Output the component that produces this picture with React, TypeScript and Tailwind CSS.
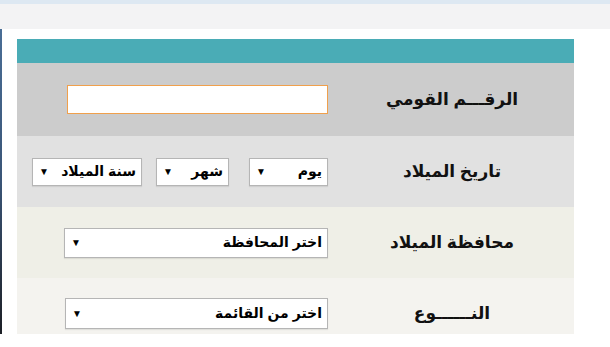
const Select = ({ label, className }: { label: string; className: string }) => (
  <div
    className={`flex items-center justify-between border border-[#b5b5b5] bg-white pr-[5px] pl-[6px] shadow-[0_1px_1px_rgba(0,0,0,0.08)] ${className}`}
  >
    <span className="text-[14px] font-bold text-black">{label}</span>
    <span className="text-[10px] text-black">▼</span>
  </div>
);

const Row = ({ label, bg, h, children }: { label: string; bg: string; h: string; children: React.ReactNode }) => (
  <div className={`flex items-center ${bg} ${h}`}>
    <div className="w-[244px] shrink-0 text-center text-[17px] font-bold text-[#111]">{label}</div>
    <div className="flex flex-1 items-center gap-[14px] pr-[2px]">{children}</div>
  </div>
);

export default function App() {
  return (
    <div
      className="h-[347px] w-[610px] overflow-hidden bg-white"
      style={{ fontFamily: '"Liberation Sans", "DejaVu Sans", Arial, sans-serif' }}
    >
      <div className="h-[4px] bg-[#dde8f2]" />
      <div className="h-[25px] bg-[#f3f3f4]" />
      <div className="flex h-[305px] overflow-hidden">
        <div className="w-[2px] shrink-0 bg-gradient-to-b from-[#4a6e96] via-[#3a5577] to-[#1c1f26]" />
        <div className="pl-[15px] pt-[10px]">
          <div className="w-[557px]" dir="rtl">
            <div className="h-[24px] bg-[#4aacb6]" />
            <Row label="الرقـــم القومي" bg="bg-[#cccccc]" h="h-[73px]">
              <div className="h-[29px] w-[261px] border border-[#f0a04c] bg-white" />
            </Row>
            <Row label="تاريخ الميلاد" bg="bg-[#e1e1e1]" h="h-[71px]">
              <Select label="يوم" className="h-[28px] w-[79px]" />
              <div className="flex items-center gap-[14px] pr-[6px]">
                <Select label="شهر" className="h-[28px] w-[73px]" />
                <Select label="سنة الميلاد" className="h-[28px] w-[110px]" />
              </div>
            </Row>
            <Row label="محافظة الميلاد" bg="bg-[#efefe7]" h="h-[71px]">
              <Select label="اختر المحافظة" className="h-[30px] w-[264px]" />
            </Row>
            <Row label="النــــــوع" bg="bg-[#f4f3ef]" h="h-[71px]">
              <div className="flex h-[71px] items-start pt-[20px]">
                <Select label="اختر من القائمة" className="h-[31px] w-[263px]" />
              </div>
            </Row>
          </div>
        </div>
      </div>
    </div>
  );
}
